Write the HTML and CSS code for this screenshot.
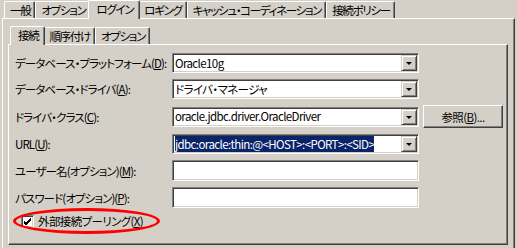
FILE: index.html
```html
<!DOCTYPE html>
<html lang="ja">
<head>
    <meta charset="UTF-8">
    <meta name="viewport" content="width=device-width, initial-scale=1.0">
    <title>接続設定</title>
    <link rel="stylesheet" href="styles.css">
</head>
<body>
    <div class="dialog">
        <ul class="tabs outer-tabs">
            <li>一般</li>
            <li>オプション</li>
            <li class="active">ログイン</li>
            <li>ロギング</li>
            <li>キャッシュ・コーディネーション</li>
            <li>接続ポリシー</li>
        </ul>
        <div class="panel outer-panel">
            <ul class="tabs inner-tabs">
                <li class="active">接続</li>
                <li>順序付け</li>
                <li>オプション</li>
            </ul>
            <div class="panel inner-panel">
                <div class="form">
                    <label>データベース・プラットフォーム(<u>D</u>):</label>
                    <div class="combo"><span class="value">Oracle10g</span><span class="drop"></span></div>
                    <span></span>

                    <label>データベース・ドライバ(<u>A</u>):</label>
                    <div class="combo"><span class="value">ドライバ・マネージャ</span><span class="drop"></span></div>
                    <span></span>

                    <label>ドライバ・クラス(<u>C</u>):</label>
                    <div class="combo"><span class="value">oracle.jdbc.driver.OracleDriver</span><span class="drop"></span></div>
                    <button class="btn">参照(<u>B</u>)...</button>

                    <label>URL(<u>U</u>):</label>
                    <div class="combo"><span class="value"><span class="selected">jdbc:oracle:thin:@&lt;HOST&gt;:&lt;PORT&gt;:&lt;SID&gt;</span></span><span class="drop"></span></div>
                    <span></span>

                    <label>ユーザー名(オプション)(<u>M</u>):</label>
                    <div class="textbox"></div>
                    <span></span>

                    <label>パスワード(オプション)(<u>P</u>):</label>
                    <div class="textbox"></div>
                    <span></span>
                </div>
                <div class="check-row">
                    <span class="checkbox">
                        <svg width="9" height="9" viewBox="0 0 9 9"><path d="M1 4 L3 6 L8 1 M1 5 L3 7 L8 2 M1 6 L3 8 L8 3" stroke="#000" stroke-width="1" fill="none"/></svg>
                    </span>
                    <span>外部接続プーリング(<u>X</u>)</span>
                    <span class="annotation"></span>
                </div>
            </div>
        </div>
    </div>
</body>
</html>
```

FILE: styles.css
```css
html, body {
    margin: 0;
    background-color: #d4d0c8;
}
body {
    font-family: "Noto Sans CJK JP", "DejaVu Sans", sans-serif;
    font-size: 11.5px;
    line-height: 14px;
    letter-spacing: -0.6px;
    color: #000;
    font-feature-settings: "palt";
    width: 517px;
    height: 248px;
    overflow: hidden;
}
u {
    text-decoration-thickness: 1px;
    text-underline-offset: 1px;
}
.dialog {
    padding: 0 2px 0 2px;
}
.tabs {
    list-style: none;
    margin: 0;
    padding: 0 0 0 2px;
    display: flex;
    align-items: flex-end;
    position: relative;
    z-index: 1;
    font-size: 11.5px;
    letter-spacing: -1.3px;
}
.tabs li {
    height: 15px;
    padding: 1px 4px 0 5px;
    border-top: 1px solid #fff;
    border-left: 1px solid #fff;
    border-right: 1px solid #404040;
    box-shadow: inset -1px 0 #808080;
    border-radius: 2px 2px 0 0;
    white-space: nowrap;
}
.tabs li.active {
    height: 17px;
    margin: 0 -2px -1px -2px;
    padding: 1px 6px 0 7px;
    background-color: #d4d0c8;
    position: relative;
}
.panel {
    border-top: 1px solid #fff;
    border-left: 1px solid #fff;
    border-right: 1px solid #404040;
    border-bottom: 1px solid #404040;
    box-shadow: inset -1px -1px #808080;
}
.outer-panel {
    height: 225px;
    padding: 7px 6px 0 5px;
}
.inner-tabs {
    padding-left: 4px;
}
.inner-panel {
    height: 191px;
    padding: 8px 6px 0 6px;
    position: relative;
}
.form {
    display: grid;
    grid-template-columns: 153px 247px 80px;
    column-gap: 4px;
    row-gap: 6px;
    align-items: center;
}
.form label {
    white-space: nowrap;
    letter-spacing: -0.9px;
}
.combo, .textbox {
    height: 16px;
    background-color: #fff;
    border: 1px solid;
    border-color: #808080 #fff #fff #808080;
    box-shadow: inset 1px 1px #404040, inset -1px -1px #d4d0c8;
    padding: 1px;
    display: flex;
    align-items: center;
}
.textbox {
    height: 17px;
}
.combo .value {
    flex: 1;
    padding-left: 1px;
    line-height: 15px;
    white-space: nowrap;
}
.selected {
    background-color: #0a246a;
    color: #fff;
}
.drop {
    width: 12px;
    height: 12px;
    background-color: #d4d0c8;
    border: 1px solid;
    border-color: #d4d0c8 #404040 #404040 #d4d0c8;
    box-shadow: inset 1px 1px #fff, inset -1px -1px #808080;
    padding: 1px;
    position: relative;
}
.drop::after {
    content: "";
    position: absolute;
    left: 4px;
    top: 6px;
    border-left: 3px solid transparent;
    border-right: 3px solid transparent;
    border-top: 3px solid #000;
}
.btn {
    height: 23px;
    font: inherit;
    letter-spacing: inherit;
    font-feature-settings: "palt";
    color: #000;
    background-color: #d4d0c8;
    border: 1px solid;
    border-color: #fff #404040 #404040 #fff;
    box-shadow: inset -1px -1px #808080;
    padding: 0;
}
.check-row {
    display: flex;
    align-items: center;
    gap: 4px;
    margin-top: 6px;
    padding-left: 6px;
    position: relative;
}
.checkbox {
    width: 9px;
    height: 9px;
    padding: 1px;
    background-color: #fff;
    border: 1px solid;
    border-color: #808080 #fff #fff #808080;
    box-shadow: inset 1px 1px #404040, inset -1px -1px #d4d0c8;
    display: flex;
}
.annotation {
    position: absolute;
    left: -2px;
    top: -6px;
    width: 141px;
    height: 20px;
    border: 3px solid #f00;
    border-radius: 50%;
}
```
